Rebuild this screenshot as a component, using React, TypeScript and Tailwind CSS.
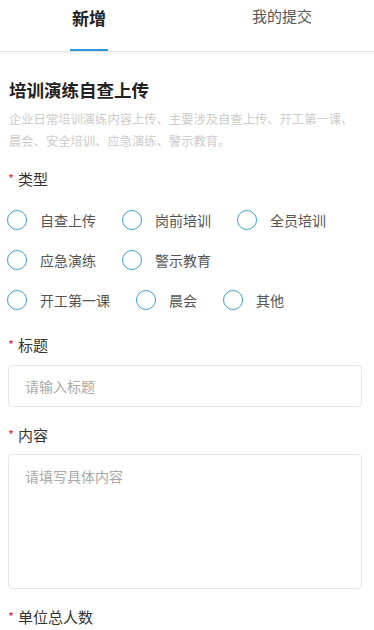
import React from "react";

const font = { fontFamily: '"Noto Sans CJK SC", "Noto Sans", sans-serif' };

function Radio({ label }: { label: string }) {
  return (
    <div className="flex items-center">
      <span className="w-[20px] h-[20px] rounded-full border-[1.5px] border-[#3b9fcf] box-border shrink-0" />
      <span className="ml-[13px] text-[14px] leading-[20px] text-[#555]">{label}</span>
    </div>
  );
}

function Label({ text }: { text: string }) {
  return (
    <div className="flex items-center h-[20px]">
      <span className="text-[#e0334d] text-[13px] w-[10px] leading-[20px]">*</span>
      <span className="text-[15px] text-[#333] leading-[20px]">{text}</span>
    </div>
  );
}

export default function App() {
  return (
    <div className="w-[374px] h-[630px] overflow-hidden bg-white" style={font}>
      <div className="flex h-[52px] border-b border-[#e3e3e3] shadow-[0_1px_2px_rgba(0,0,0,0.05)]">
        <div className="w-[178px] flex flex-col items-center">
          <div className="h-[50px] flex items-center text-[17px] font-bold text-[#222] pb-[14px]">新增</div>
          <div className="w-[38px] h-[2px] bg-[#2a96d4]" />
        </div>
        <div className="flex-1 flex justify-center pl-[12px]">
          <div className="h-[50px] flex items-center text-[15px] text-[#555] pb-[18px]">我的提交</div>
        </div>
      </div>

      <div className="px-[8px]">
        <div className="pl-[1px] pt-[26px] text-[17.5px] font-bold text-[#222] leading-[24px]">培训演练自查上传</div>
        <div className="pl-[1px] pr-[8px] mt-[6px] text-[12.3px] leading-[22px] text-[#cccccc]">
          企业日常培训演练内容上传、主要涉及自查上传、开工第一课、晨会、安全培训、应急演练、警示教育。
        </div>

        <div className="mt-[17px]">
          <Label text="类型" />
        </div>

        <div className="mt-[21px] ml-[-1px] flex flex-col gap-[20px]">
          <div className="flex gap-[26px]">
            <Radio label="自查上传" />
            <Radio label="岗前培训" />
            <Radio label="全员培训" />
          </div>
          <div className="flex gap-[26px]">
            <Radio label="应急演练" />
            <Radio label="警示教育" />
          </div>
          <div className="flex gap-[26px]">
            <Radio label="开工第一课" />
            <Radio label="晨会" />
            <Radio label="其他" />
          </div>
        </div>

        <div className="mt-[25px]">
          <Label text="标题" />
        </div>
        <div className="mt-[10px] w-[354px] h-[42px] border border-[#e6e6e6] rounded-[4px] flex items-center px-[16px] text-[14px] text-[#aaa]">
          请输入标题
        </div>

        <div className="mt-[18px]">
          <Label text="内容" />
        </div>
        <div className="mt-[9px] w-[354px] h-[135px] border border-[#e6e6e6] rounded-[4px] px-[16px] pt-[11px] text-[14px] leading-[20px] text-[#aaa]">
          请填写具体内容
        </div>

        <div className="mt-[18px]">
          <Label text="单位总人数" />
        </div>
      </div>
    </div>
  );
}
